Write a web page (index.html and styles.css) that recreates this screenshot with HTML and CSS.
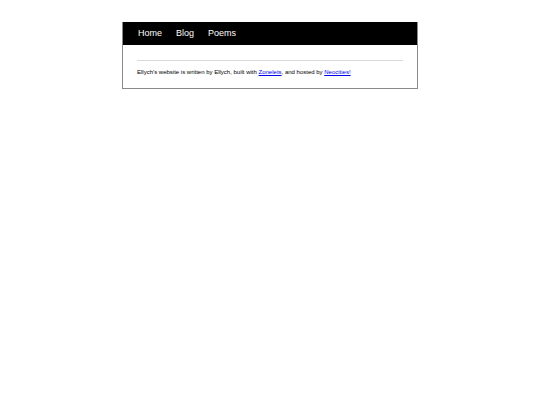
FILE: index.html
```html
<!DOCTYPE html>
<html>
<head>
<meta charset="utf-8">
<link rel="stylesheet" href="styles.css">
</head>
<body>
<div class="site">
  <header class="header">
    <nav class="nav">
      <a class="nav-link" href="#">Home</a>
      <a class="nav-link" href="#">Blog</a>
      <a class="nav-link" href="#">Poems</a>
    </nav>
  </header>
  <main class="content">
    <hr class="rule">
    <p class="footer">Ellych's website is written by Ellych, built with <a href="#">Zonelets</a>, and hosted by <a href="#">Neocities!</a></p>
  </main>
</div>
</body>
</html>
```

FILE: styles.css
```css
body {
  margin: 0;
  background: #fff;
  font-family: "Liberation Sans", Arial, sans-serif;
}
.site {
  width: 294px;
  margin: 22px auto 0;
  border: 1px solid #8a8a8a;
  border-top: none;
}
.header {
  background: #000;
  height: 23px;
  display: flex;
  align-items: center;
  padding-left: 15px;
}
.nav {
  display: flex;
  gap: 14px;
}
.nav-link {
  color: #fff;
  text-decoration: none;
  font-size: 9px;
  line-height: 1;
}
.content {
  padding: 15px 14px 12px 14px;
}
.rule {
  margin: 0;
  border: none;
  height: 1px;
  background: #d9d9d9;
}
.footer {
  margin: 8px 0 0;
  font-size: 6px;
  line-height: 7px;
  color: #000;
}
.footer a {
  color: #0000ee;
}
```
